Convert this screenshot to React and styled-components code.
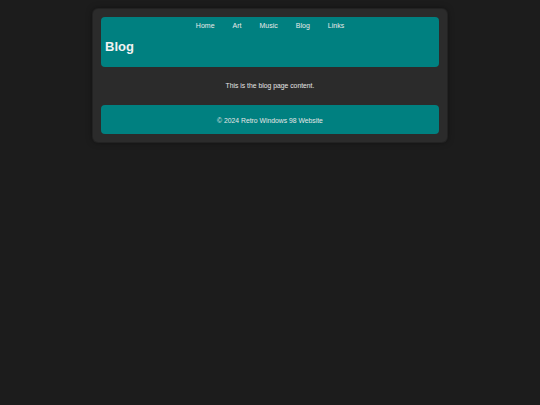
import React from 'react';
import styled, { createGlobalStyle } from 'styled-components';

const GlobalStyle = createGlobalStyle`
    html, body {
        margin: 0;
        padding: 0;
        background-color: #1c1c1c;
        font-family: "Liberation Sans", Arial, sans-serif;
        min-height: 100vh;
    }
`

const Window = styled.div`
    width: 354px;
    box-sizing: border-box;
    margin: 9px auto 0;
    padding: 8px;
    background-color: #2b2b2b;
    border-radius: 5px;
    box-shadow: 0 0 0 1px #222, 0 0 6px rgba(0, 0, 0, 0.5);
`

const Header = styled.header`
    background-color: #008080;
    border-radius: 4px;
    padding: 5px 4px 4px;
`

const Nav = styled.nav`
    display: flex;
    justify-content: center;
`

const NavLink = styled.a`
    color: #eaeaea;
    font-size: 7px;
    line-height: 8px;
    padding: 0 9px;
    text-decoration: none;
`

const Title = styled.h1`
    color: #f2f2f2;
    font-size: 13px;
    line-height: 15px;
    font-weight: 700;
    margin: 9px 0 9px;
`

const Main = styled.main`
    padding: 15px 0 15px;
    text-align: center;
`

const Text = styled.p`
    margin: 0;
    color: #e6e6e6;
    font-size: 6.8px;
    line-height: 8px;
`

const Footer = styled.footer`
    background-color: #008080;
    border-radius: 4px;
    padding: 12px 0 9px;
    text-align: center;
`

const links = ['Home', 'Art', 'Music', 'Blog', 'Links'];

export default function App() {

    return (
        <>
            <GlobalStyle />
            <Window>
                <Header>
                    <Nav>
                        {links.map((l) => (
                            <NavLink key={l} href="#">{l}</NavLink>
                        ))}
                    </Nav>
                    <Title>Blog</Title>
                </Header>

                <Main>
                    <Text>This is the blog page content.</Text>
                </Main>

                <Footer>
                    <Text>© 2024 Retro Windows 98 Website</Text>
                </Footer>
            </Window>
        </>
    )

}
